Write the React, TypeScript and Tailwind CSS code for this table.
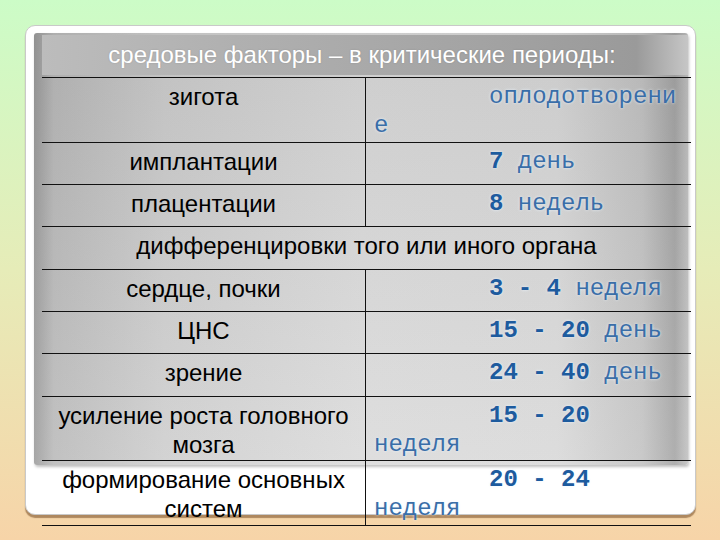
import React from "react";

const sans = "font-['Liberation_Sans',Arial,sans-serif]";
const mono = "font-['Liberation_Mono','Courier_New',monospace]";

function Num({ children }: { children: React.ReactNode }) {
  return <span className="font-bold text-[#1d5b9e]">{children}</span>;
}
function Word({ children }: { children: React.ReactNode }) {
  return <span className="font-normal text-[#3a6ea8]">{children}</span>;
}

function Row({
  h,
  left,
  right,
  last,
}: {
  h: string;
  left: React.ReactNode;
  right: React.ReactNode;
  last?: boolean;
}) {
  return (
    <div className={`flex border-t border-[#111] ${h} ${last ? "border-b" : ""}`}>
      <div
        className={`w-[324px] shrink-0 border-r border-[#111] pt-[4px] text-center text-[24px] leading-[29px] text-black ${sans}`}
      >
        {left}
      </div>
      <div
        className={`flex-1 pl-[8px] pt-[4px] indent-[115px] text-[24px] leading-[29px] ${mono} [text-shadow:0_0_3px_rgba(235,245,255,0.95)]`}
      >
        {right}
      </div>
    </div>
  );
}

export default function App() {
  return (
    <div className="grid h-[540px] w-[720px] overflow-hidden bg-[linear-gradient(to_bottom,#ccfcc7_0%,#e6ecb8_50%,#f7d4a8_100%)]">
      {/* card */}
      <div className="col-start-1 row-start-1 ml-[25px] mt-[25px] h-[490px] w-[671px] rounded-[10px] border border-[#c9c9c9] bg-white pl-[8px] pt-[7px] shadow-[0_3px_1px_rgba(150,110,70,0.75)]">
        <div className="flex h-[432px] w-[654px] flex-col rounded-[3px] bg-[linear-gradient(to_bottom,rgba(0,0,0,0.06),rgba(255,255,255,0.12)),linear-gradient(to_right,#9a9a9a_0%,#b9b9b9_3%,#cdcdcd_20%,#dadada_50%,#d8d8d8_80%,#c2c2c2_93%,#a4a4a4_98%,#c0c0c0_100%)] shadow-[1px_2px_3px_rgba(0,0,0,0.25)]">
          <div
            className={`ml-[8px] mt-[2px] flex h-[40px] items-center justify-center bg-[linear-gradient(to_right,#bcbcbc_0%,#b0b0b0_30%,#a6a6a6_60%,#9a9a9a_92%,#c6c6c6_100%)] pr-[6px] text-[24px] leading-none text-white ${sans} [text-shadow:0_0_2px_rgba(0,0,0,0.15)]`}
          >
            средовые факторы – в критические периоды:
          </div>
        </div>
      </div>

      {/* table */}
      <div className="col-start-1 row-start-1 ml-[42px] mt-[77px] w-[649px]">
        <Row
          h="h-[65px]"
          left="зигота"
          right={
            <>
              <Word>оплодотворени</Word>
              <br />
              <Word>е</Word>
            </>
          }
        />
        <Row
          h="h-[42px]"
          left="имплантации"
          right={
            <>
              <Num>7</Num> <Word>день</Word>
            </>
          }
        />
        <Row
          h="h-[42px]"
          left="плацентации"
          right={
            <>
              <Num>8</Num> <Word>недель</Word>
            </>
          }
        />
        <div
          className={`h-[43px] border-t border-[#111] pt-[4px] text-center text-[24px] leading-[29px] text-black ${sans}`}
        >
          дифференцировки того или иного органа
        </div>
        <Row
          h="h-[42px]"
          left="сердце, почки"
          right={
            <>
              <Num>3 - 4</Num> <Word>неделя</Word>
            </>
          }
        />
        <Row
          h="h-[42px]"
          left="ЦНС"
          right={
            <>
              <Num>15 - 20</Num> <Word>день</Word>
            </>
          }
        />
        <Row
          h="h-[43px]"
          left="зрение"
          right={
            <>
              <Num>24 - 40</Num> <Word>день</Word>
            </>
          }
        />
        <Row
          h="h-[64px]"
          left={
            <>
              усиление роста головного
              <br />
              мозга
            </>
          }
          right={
            <>
              <Num>15 - 20</Num>
              <br />
              <Word>неделя</Word>
            </>
          }
        />
        <Row
          h="h-[66px]"
          last
          left={
            <>
              формирование основных
              <br />
              систем
            </>
          }
          right={
            <>
              <Num>20 - 24</Num>
              <br />
              <Word>неделя</Word>
            </>
          }
        />
      </div>
    </div>
  );
}
